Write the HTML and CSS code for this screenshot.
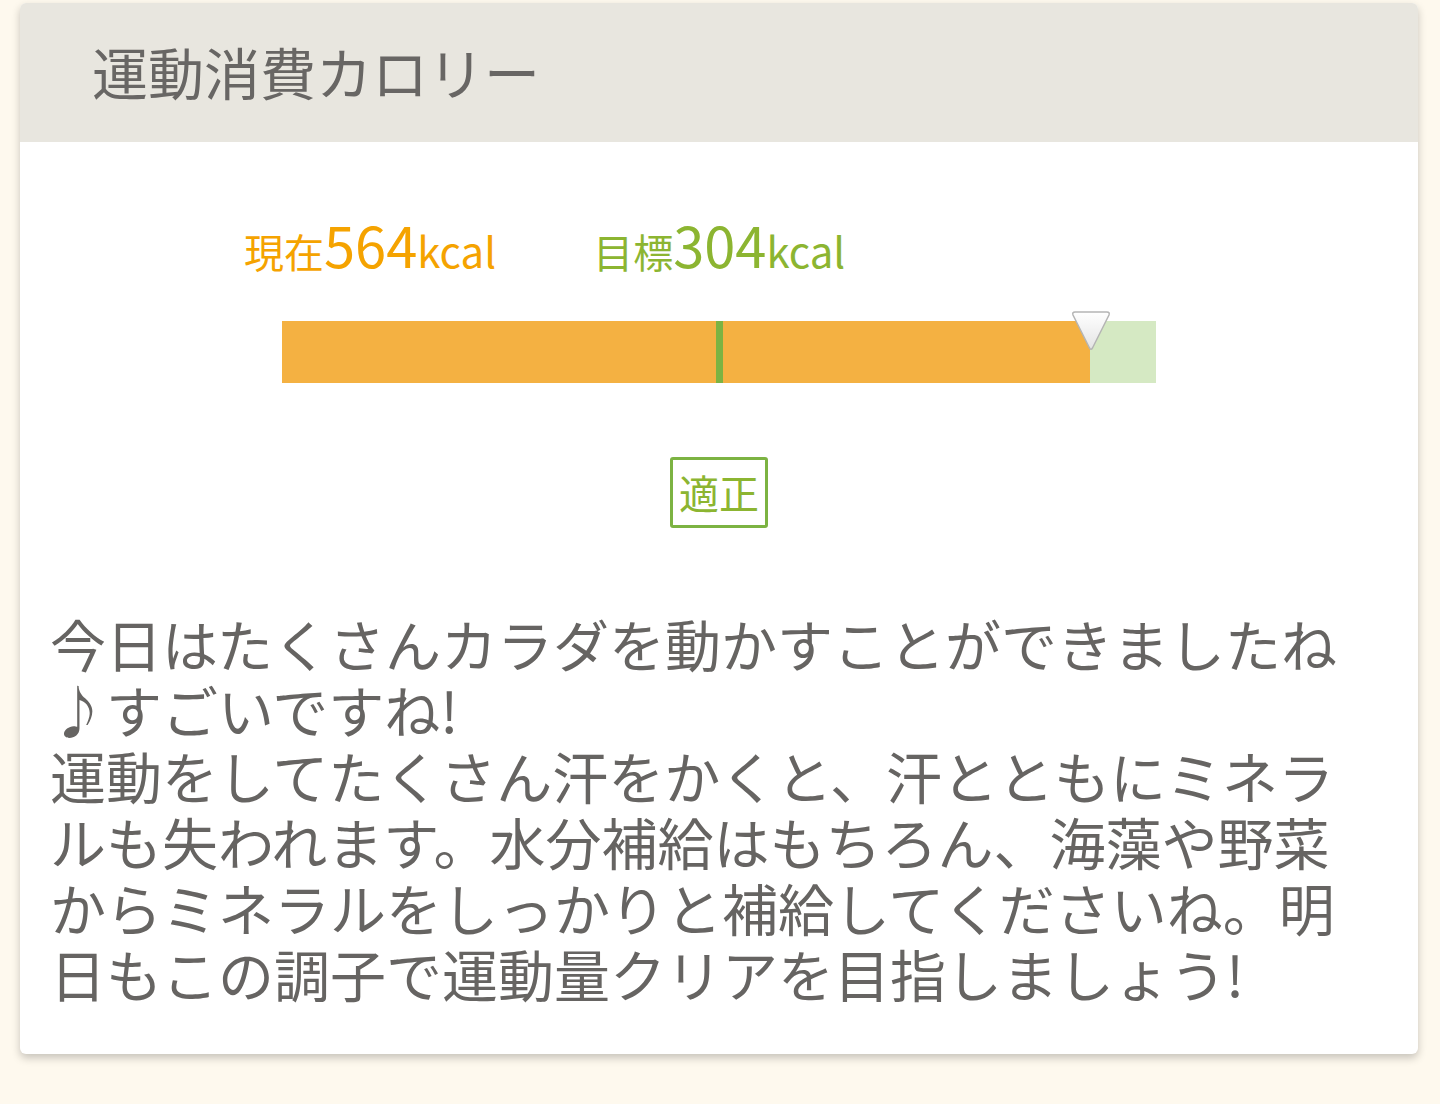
FILE: index.html
```html
<!DOCTYPE html>
<html lang="ja">
<head>
    <meta charset="UTF-8">
    <meta name="viewport" content="width=device-width, initial-scale=1.0">
    <title>運動消費カロリー</title>
    <link rel="stylesheet" href="styles.css">
</head>
<body>
    <div class="card">
        <div class="card-header">運動消費カロリー</div>
        <div class="card-body">
            <div class="values">
                <div class="value value-now">現在<span class="num">564</span><span class="unit">kcal</span></div>
                <div class="value value-goal">目標<span class="num">304</span><span class="unit">kcal</span></div>
            </div>
            <div class="bar">
                <div class="bar-fill" style="width: 92.4%;"></div>
                <div class="bar-target"></div>
                <svg class="bar-pointer" style="left: 92.6%;" width="42" height="42" viewBox="0 0 42 42">
                    <defs>
                        <linearGradient id="pointerFill" x1="0" y1="0" x2="0" y2="1">
                            <stop offset="0" stop-color="#ffffff"/>
                            <stop offset="1" stop-color="#e4e4e4"/>
                        </linearGradient>
                    </defs>
                    <path d="M5 2 H37 Q40 2 39 5 L22.5 38 Q21 40.5 19.5 38 L3 5 Q2 2 5 2 Z" fill="url(#pointerFill)" stroke="#b5b5b5" stroke-width="1.5"/>
                </svg>
            </div>
            <div class="judge"><span class="judge-label">適正</span></div>
            <p class="message">今日はたくさんカラダを動かすことができましたね♪すごいですね!<br>運動をしてたくさん汗をかくと、汗とともにミネラルも失われます。水分補給はもちろん、海藻や野菜からミネラルをしっかりと補給してくださいね。明日もこの調子で運動量クリアを目指しましょう!</p>
        </div>
    </div>
</body>
</html>
```

FILE: styles.css
```css
body {
    margin: 0;
    padding: 3px 22px 40px 20px;
    background-color: #fef9ee;
    font-family: "Noto Sans CJK JP", "Noto Sans", sans-serif;
    color: #666462;
}

.card {
    background-color: #fff;
    border-radius: 6px;
    box-shadow: 0 4px 9px rgba(0, 0, 0, 0.22);
    overflow: hidden;
}

.card-header {
    background-color: #e8e6df;
    height: 135px;
    display: flex;
    align-items: center;
    padding: 0 0 4px 72px;
    font-size: 56px;
    color: #686664;
}

.card-body {
    padding: 74px 60px 48px 30px;
}

.values {
    display: flex;
    gap: 97px;
    padding-left: 194px;
    align-items: baseline;
    line-height: 1;
}

.value {
    font-size: 40px;
}

.value .num {
    font-size: 56px;
}

.value .unit {
    font-size: 42px;
}

.value-now {
    color: #f5a300;
}

.value-goal {
    color: #8cb531;
}

.bar {
    position: relative;
    width: 874px;
    height: 62px;
    margin: 49px 0 0 232px;
    background-color: #d5e9c3;
}

.bar-fill {
    height: 100%;
    background-color: #f4b142;
}

.bar-target {
    position: absolute;
    left: 434px;
    top: 0;
    width: 7px;
    height: 100%;
    background-color: #7cb342;
}

.bar-pointer {
    position: absolute;
    top: -11px;
    margin-left: -21px;
}

.judge {
    display: flex;
    justify-content: center;
    margin-top: 74px;
    padding-left: 30px;
}

.judge-label {
    border: 3px solid #7cb342;
    border-radius: 3px;
    padding: 5px 6px;
    font-size: 40px;
    line-height: 55px;
    color: #8cb531;
}

.message {
    margin: 82px 0 0 0;
    font-size: 56px;
    line-height: 66px;
}
```
